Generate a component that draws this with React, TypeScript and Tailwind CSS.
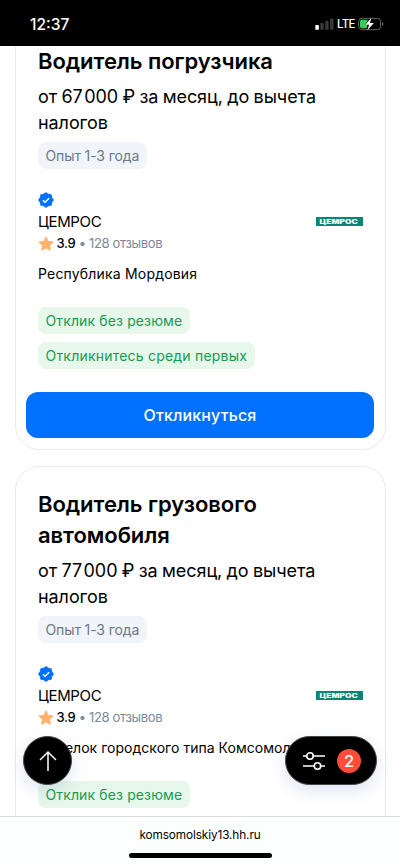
import clsx from "clsx";

type Vacancy = {
  title: string;
  salary: string;
  experience: string;
  company: string;
  rating: string;
  reviews: string;
  location: string;
  locationClass: string;
};

const vacancies: Vacancy[] = [
  {
    title: "Водитель погрузчика",
    salary: "67\u200a000",
    experience: "Опыт 1-3 года",
    company: "ЦЕМРОС",
    rating: "3.9",
    reviews: "128 отзывов",
    location: "Республика Мордовия",
    locationClass: "tracking-[0.19px]",
  },
  {
    title: "Водитель грузового автомобиля",
    salary: "77\u200a000",
    experience: "Опыт 1-3 года",
    company: "ЦЕМРОС",
    rating: "3.9",
    reviews: "128 отзывов",
    location: "Поселок городского типа Комсомольский",
    locationClass: "tracking-[0.03px]",
  },
];

const StatusBar = () => (
  <header className="relative z-10 flex h-[46px] shrink-0 items-center justify-between bg-black pl-[30px] pr-[16px] pt-[2px] text-white">
    <span className="pt-px text-[15.5px] font-medium leading-none">12:37</span>
    <div className="flex items-center">
      <svg width="19" height="12" viewBox="0 0 19 12">
        <rect x="0.3" y="7" width="3.6" height="4.8" rx="0.9" fill="#fff" />
        <rect x="5.3" y="5" width="3.4" height="6.8" rx="0.9" fill="#393939" />
        <rect x="10.2" y="2.8" width="3.4" height="9" rx="0.9" fill="#393939" />
        <rect x="15.1" y="0.4" width="3.4" height="11.4" rx="0.9" fill="#393939" />
      </svg>
      <span className="ml-[3px] w-[18px] pt-[2px] text-[11.5px] font-medium leading-none tracking-[-0.7px]">
        LTE
      </span>
      <svg width="26" height="14" viewBox="0 0 26 14" className="ml-[3px]">
        <rect x="0.6" y="1.3" width="22" height="11.4" rx="3.4" fill="none" stroke="#666" />
        <path d="M3.8 2.7H10L7.2 7.8H9.2L8.7 11.3H3.8A1.8 1.8 0 0 1 2 9.5V4.5A1.8 1.8 0 0 1 3.8 2.7Z" fill="#30d158" />
        <path d="M24 5.2C25 5.5 25.4 6.2 25.4 7S25 8.5 24 8.8Z" fill="#666" />
        <path d="M13.3 0.8L7.3 7.8H11.1L9.4 13.2L15.9 6H12Z" fill="#fff" />
      </svg>
    </div>
  </header>
);

const VerifiedIcon = () => (
  <svg width="16" height="16" viewBox="0 0 16 16" className="ml-[-0.5px]">
    <path
      d="M8 0.4L10.2 2.1L13.3 2.7L13.9 5.8L15.6 8L13.9 10.2L13.3 13.3L10.2 13.9L8 15.6L5.8 13.9L2.7 13.3L2.1 10.2L0.4 8L2.1 5.8L2.7 2.7L5.8 2.1Z"
      fill="#0070ff"
      stroke="#0070ff"
      strokeWidth="0.7"
      strokeLinejoin="round"
    />
    <path d="M4.9 8.2L7 10.2L11.1 6.2" fill="none" stroke="#fff" strokeWidth="1.4" />
  </svg>
);

const StarIcon = () => (
  <svg width="16" height="16" viewBox="0 0 16 16" className="ml-[-0.5px] shrink-0">
    <path
      d="M8 1.2L10 5.5L14.8 6.1L11.3 9.3L12.2 14L8 11.7L3.8 14L4.7 9.3L1.2 6.1L6 5.5Z"
      fill="#ffb46e"
      stroke="#ffb46e"
      strokeWidth="1.4"
      strokeLinejoin="round"
    />
  </svg>
);

const Tag = ({ text, className }: { text: string; className: string }) => (
  <span
    className={clsx(
      "flex h-[27px] w-fit items-center whitespace-nowrap rounded-lg px-[7.5px] text-[14px]",
      className
    )}
  >
    {text}
  </span>
);

const VacancyCard = ({ vacancy }: { vacancy: Vacancy }) => {
  const { title, salary, experience, company, rating, reviews, location, locationClass } = vacancy;

  return (
    <article className="shrink-0 rounded-[24px] border-[1.5px] border-[#e6eaf1] px-[22.5px] pb-[11px] pt-[22.5px]">
      <h2 className="w-[260px] text-[22px] font-semibold leading-[31px] tracking-[-0.06px]">
        {title}
      </h2>
      <p className="mt-[7px] text-[18px] leading-[25.5px] tracking-[-0.07px] [word-spacing:-0.6px]">
        от {salary} ₽ за месяц, до вычета
        <br />
        налогов
      </p>
      <Tag text={experience} className="mt-[7px] bg-[#f1f4f9] tracking-[-0.12px] text-[#6a7a8c]" />
      <div className="mt-[23px]">
        <VerifiedIcon />
        <div className="flex h-[27px] items-center justify-between pt-[2px]">
          <span className="text-[15px] tracking-[-0.35px]">{company}</span>
          <span className="mb-[3px] flex h-[9px] w-[47px] items-center justify-center bg-[#088573] pt-[1.5px]">
            <span className="scale-x-[1.4] text-[6px] font-black leading-none text-white">
              {company}
            </span>
          </span>
        </div>
        <div className="flex h-[18px] items-center whitespace-nowrap text-[13px]">
          <StarIcon />
          <span className="ml-[3px] font-medium tracking-[-0.35px]">{rating}</span>
          <span className="ml-[3.5px] tracking-[-0.36px] text-[#7b8a9b]">• {reviews}</span>
        </div>
        <p className={clsx("mt-[11px] whitespace-nowrap text-[14px] leading-5", locationClass)}>
          {location}
        </p>
      </div>
      <div className="mt-[22.5px] flex flex-col gap-2">
        <Tag
          text="Отклик без резюме"
          className="bg-[#e7f7ea] tracking-[0.13px] text-[#149b54]"
        />
        <Tag
          text="Откликнитесь среди первых"
          className="bg-[#e7f7ea] tracking-[0.21px] text-[#149b54]"
        />
      </div>
      <button className="-mx-3 mt-[23px] flex h-[46px] w-[348px] items-center justify-center rounded-xl bg-[#0070ff] text-[16px] font-medium tracking-[0.15px] text-white">
        Откликнуться
      </button>
    </article>
  );
};

const FloatingActions = () => (
  <div className="absolute inset-x-0 bottom-[81px] flex justify-between px-[23px]">
    <button className="flex size-[49px] items-center justify-center rounded-full border border-[#444] bg-black shadow-[0_6px_16px_rgba(100,125,180,0.2)]">
      <svg width="20" height="22" viewBox="0 0 20 22" fill="none" stroke="#fff" strokeWidth="1.5">
        <path d="M10 21V2M2 10L10 2L18 10" />
      </svg>
    </button>
    <button className="flex h-[49px] w-[92px] items-center rounded-full border border-[#444] bg-black pl-[17px] shadow-[0_6px_16px_rgba(100,125,180,0.2)]">
      <svg width="22" height="20" viewBox="0 0 22 20" fill="none" stroke="#fff" strokeWidth="1.6">
        <path d="M0 5H3.8M10.2 5H22M0 15H11.3M17.7 15H22" />
        <circle cx="7" cy="5" r="3.2" />
        <circle cx="14.5" cy="15" r="3.2" />
      </svg>
      <span className="ml-3 flex size-6 items-center justify-center rounded-full bg-[#ff4d3a] pt-px text-[16.5px] font-medium text-white">
        2
      </span>
    </button>
  </div>
);

const AddressBar = () => (
  <footer className="relative flex h-[50.5px] shrink-0 flex-col items-center border-t-[1.5px] border-[#d9dcdc] bg-[#fdfefe]">
    <span className="mt-[8.5px] text-[11.8px] leading-5 tracking-[-0.11px]">
      komsomolskiy13.hh.ru
    </span>
    <span className="mt-[8px] h-[5px] w-[143px] rounded-full bg-black" />
  </footer>
);

export default function App() {
  return (
    <div className="relative flex h-[866px] w-[400px] flex-col overflow-hidden bg-white font-['Inter','Liberation_Sans',sans-serif] text-black">
      <StatusBar />
      <main className="-mt-[23.5px] flex min-h-0 flex-1 flex-col gap-4 overflow-hidden pl-[14.5px] pr-[14px]">
        {vacancies.map((vacancy) => (
          <VacancyCard key={vacancy.title} vacancy={vacancy} />
        ))}
      </main>
      <FloatingActions />
      <AddressBar />
    </div>
  );
}
